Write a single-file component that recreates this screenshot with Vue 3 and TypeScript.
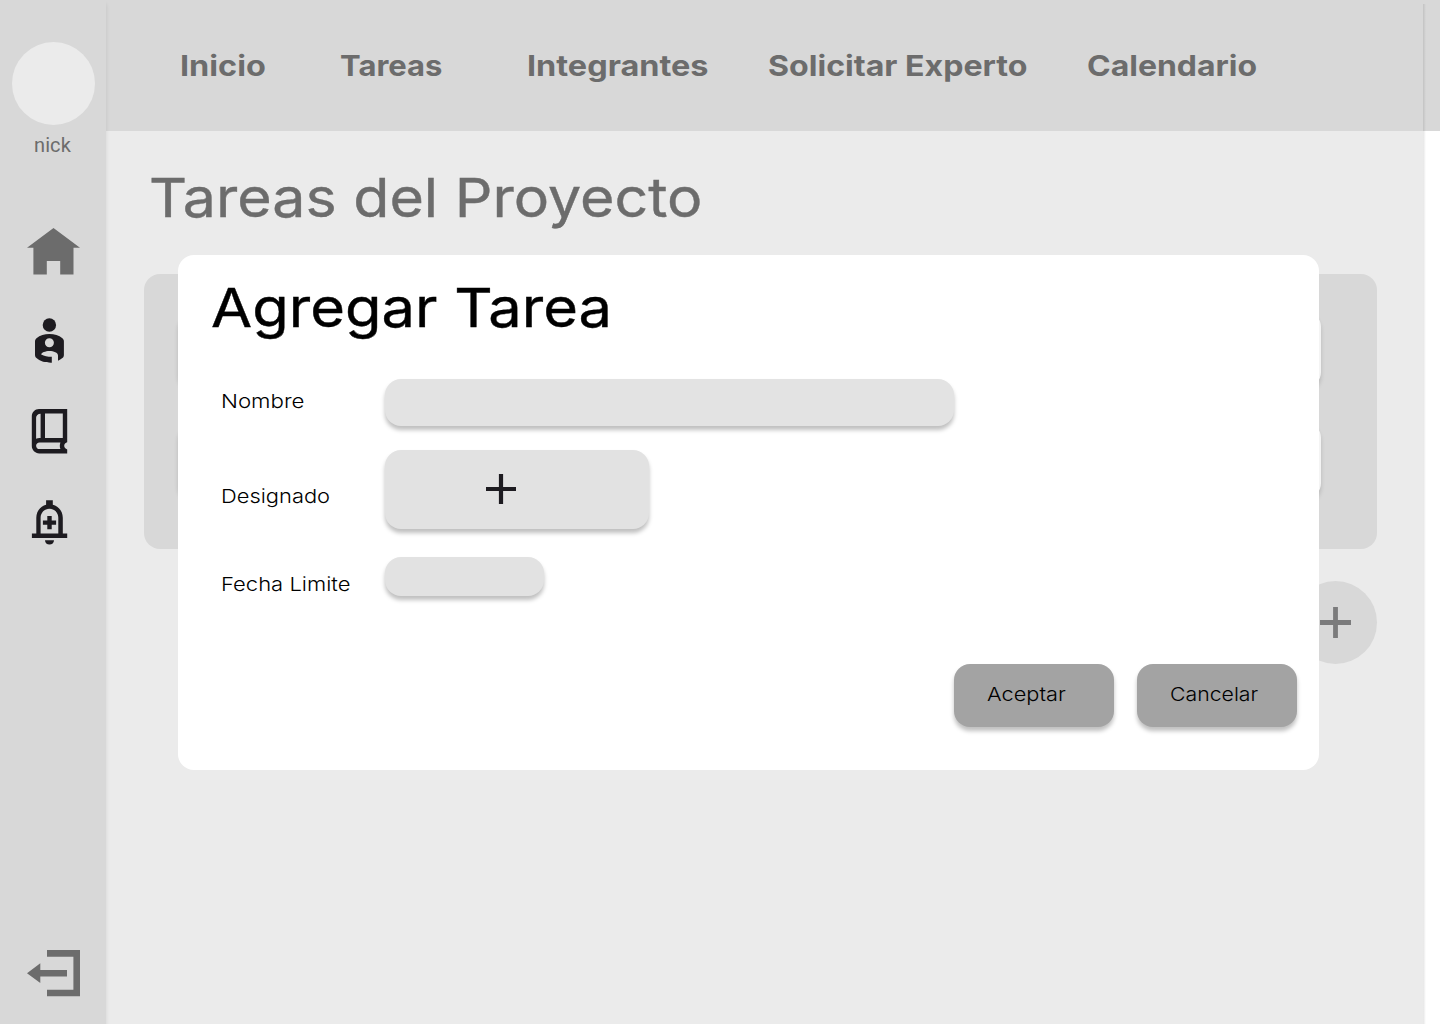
<script setup lang="ts">
interface NavItem {
  label: string
  width: number
  stretch: number
}

const navItems: NavItem[] = [
  { label: 'Inicio', width: 159.5, stretch: 1.118 },
  { label: 'Tareas', width: 187.5, stretch: 1.068 },
  { label: 'Integrantes', width: 241, stretch: 1.118 },
  { label: 'Solicitar Experto', width: 319, stretch: 1.108 },
  { label: 'Calendario', width: 190, stretch: 1.103 },
]
</script>

<template>
  <div class="app">
    <aside class="sidebar">
      <div class="avatar"></div>
      <span class="nick">nick</span>
      <svg class="icon home" width="107" height="48" viewBox="0 228 107 48">
        <path fill="#6c6c6c" d="M53.5 228 80 247.8h-6.5v26.7H60.2V261H46.8v13.5H33.4v-26.7H27z" />
      </svg>
      <svg class="icon person" width="107" height="46" viewBox="0 318 107 46">
        <circle cx="49.4" cy="325" r="6.7" fill="#1d1b20" />
        <path fill="#1d1b20" fill-rule="evenodd" d="M49.4 334c5 0 9.500 1.300 13 4.300 1 .9 1.500 1.900 1.500 3.300v13.200c0 1.400-.5 2.500-1.500 3.300-1.400 1.200-2.900 2-4.400 2.700v-5.300c0-2.600-4.300-4.400-8.600-4.400-4 0-8.200 1.800-8.200 3.300 3 1.600 6.300 2.400 10.600 2.400v5.900c-6 .1-11-.8-15.300-4.600-1-.8-1.500-1.900-1.500-3.300v-13.200c0-1.400.5-2.400 1.500-3.300 3.500-3 8-4.300 12.900-4.300zm0 4.200a4.500 4.500 0 1 0 0 9 4.500 4.500 0 1 0 0-9z" />
      </svg>
      <svg class="icon book" width="107" height="46" viewBox="0 408 107 46">
        <path fill="#1d1b20" fill-rule="evenodd" d="M39 409h28.200v33.300c-1.700.4-3 1.800-3 3.500s1.300 3.100 3 3.600v4H39.300c-4.200 0-7.500-3.200-7.500-7.300v-29.700c0-4.100 3.100-7.400 7.200-7.400zm6 4.500V438h17.800v-24.500zm-4.400.2c-2.700.1-4.500 1.700-4.500 4v21.100c1-.5 2.200-.8 3.500-.8h1zm-1.100 28.700c-2 0-3.400 1.500-3.400 3.300 0 2 1.500 3.400 3.400 3.400h20.900c-.8-2.200-.8-4.500 0-6.700z" />
      </svg>
      <svg class="icon bell" width="107" height="46" viewBox="0 500 107 46">
        <path fill="#1d1b20" fill-rule="evenodd" d="M46.100 500.300h6.700v4.500c5.900 1.500 10 6.600 10 12.900v15.900h4.400v4.400H31.900v-4.400h4.400v-15.900c0-6.300 4-11.400 9.800-12.900zm3.400 8.500c-5 0-8.900 3.900-8.900 8.900v15.900h17.700v-15.900c0-5-3.900-8.900-8.800-8.900z" />
        <path fill="#1d1b20" d="M47.300 516h4.400v4.400h4.400v4.400h-4.400v4.500h-4.400v-4.500h-4.400v-4.400h4.400zM45 540.200h9c0 2.500-2 4.400-4.500 4.400s-4.500-1.900-4.500-4.400z" />
      </svg>
      <svg class="icon logout" width="107" height="48" viewBox="0 949 107 48">
        <path fill="#6c6c6c" d="M47 950h33v46.300H47v-6.600h26.400v-33H47zM27 973.200l13.300-9.900v6.600H67v6.600H40.300v6.500z" />
      </svg>
    </aside>

    <header class="topbar">
      <nav class="nav">
        <a
          v-for="item in navItems"
          :key="item.label"
          class="nav-link"
          :style="{ width: item.width + 'px' }"
        ><span class="stretch" :style="{ transform: `scaleX(${item.stretch})` }">{{ item.label }}</span></a>
      </nav>
    </header>

    <main class="content">
      <h1 class="page-title"><span class="stretch">Tareas del Proyecto</span></h1>
      <section class="panel">
        <div class="task"></div>
        <div class="task"></div>
      </section>
      <button class="fab" aria-label="Agregar">
        <svg width="83" height="83" viewBox="0 0 83 83">
          <path d="M41.500 26v31M26 41.500h31" stroke="#7b7b7c" stroke-width="4.800" />
        </svg>
      </button>
    </main>
    <div class="edge"></div>

    <section class="modal">
      <h2 class="modal-title"><span class="stretch">Agregar Tarea</span></h2>
      <div class="row name-row">
        <span class="label"><span class="stretch">Nombre</span></span>
        <div class="field name"></div>
      </div>
      <div class="row assignee-row">
        <span class="label"><span class="stretch">Designado</span></span>
        <div class="field assignee">
          <svg width="32" height="32" viewBox="0 0 32 32">
            <path d="M16 1v30M1 16h30" stroke="#1d1b20" stroke-width="4.200" />
          </svg>
        </div>
      </div>
      <div class="row date-row">
        <span class="label"><span class="stretch">Fecha Limite</span></span>
        <div class="field date"></div>
      </div>
      <div class="actions">
        <button class="action accept"><span class="stretch">Aceptar</span></button>
        <button class="action cancel"><span class="stretch">Cancelar</span></button>
      </div>
    </section>
  </div>
</template>

<style>
body {
  margin: 0;
  background: #fff;
}
</style>

<style scoped>
.app {
  position: relative;
  width: 1440px;
  height: 1024px;
  overflow: hidden;
  display: grid;
  grid-template-columns: 106px 1334px;
  grid-template-rows: 131px 893px;
  font-family: Inter, "Open Sans", sans-serif;
  background: #fff;
}
.stretch {
  display: inline-block;
  transform-origin: 0 50%;
}
.sidebar {
  grid-row: 1 / 3;
  z-index: 1;
  display: flex;
  flex-direction: column;
  align-items: flex-start;
  background: #d8d8d8;
  box-shadow: 0 4px 4px rgba(0, 0, 0, 0.1);
}
.avatar {
  width: 83px;
  height: 83px;
  margin: 42px 0 0 12px;
  border-radius: 50%;
  background: #ebebeb;
}
.nick {
  margin: 8px 0 0 34px;
  height: 24px;
  font-family: Roboto, sans-serif;
  font-size: 20px;
  line-height: 24px;
  letter-spacing: 0.1px;
  color: #6c6c6c;
}
.icon {
  display: block;
  flex: none;
}
.home { margin-top: 71px; }
.person { margin-top: 42px; }
.book { margin-top: 44px; }
.bell { margin-top: 46px; }
.logout { margin-top: 403px; }
.topbar {
  background: #d8d8d8;
}
.nav {
  display: flex;
  padding: 48px 0 0 74px;
}
.nav-link {
  flex: none;
  font-size: 29px;
  font-weight: 700;
  line-height: 36px;
  white-space: nowrap;
  color: #6c6c6c;
}
.content {
  width: 1317px;
  background: #ebebeb;
  display: flex;
  flex-direction: column;
}
.page-title {
  margin: 34px 0 0 43px;
  height: 109px;
  font-size: 54px;
  font-weight: 400;
  line-height: 66px;
  white-space: nowrap;
  color: #6c6c6c;
  -webkit-text-stroke: 0.4px currentColor;
}
.page-title .stretch { transform: scaleX(1.094); }
.panel {
  box-sizing: border-box;
  width: 1233px;
  height: 275px;
  margin-left: 38px;
  padding: 37px 56px 0 34px;
  border-radius: 16px;
  background: #d8d8d8;
  display: flex;
  flex-direction: column;
  gap: 34px;
}
.task {
  height: 77px;
  border-radius: 16px;
  background: #f4f4f4;
  box-shadow: 0 4px 4px rgba(0, 0, 0, 0.15);
}
.fab {
  width: 83px;
  height: 83px;
  margin: 32px 0 0 1188px;
  padding: 0;
  border: 0;
  border-radius: 50%;
  background: #d8d8d8;
}
.fab svg { display: block; }
.edge {
  position: absolute;
  left: 1423px;
  top: 4px;
  width: 3px;
  height: 1020px;
  background: linear-gradient(90deg, rgba(0, 0, 0, 0.1), rgba(0, 0, 0, 0));
}
.modal {
  position: absolute;
  z-index: 2;
  left: 178px;
  top: 255px;
  width: 1141px;
  height: 515px;
  border-radius: 16px;
  background: #fff;
  color: #000;
}
.modal-title {
  margin: 0 0 0 33px;
  padding-top: 20px;
  height: 104px;
  font-size: 54px;
  font-weight: 400;
  line-height: 66px;
  white-space: nowrap;
  -webkit-text-stroke: 0.4px currentColor;
}
.modal-title .stretch { transform: scaleX(1.104); }
.row {
  display: flex;
  padding-left: 43px;
}
.label {
  width: 164px;
  font-size: 19.3px;
  font-weight: 300;
  line-height: 24px;
  white-space: nowrap;
}
.field {
  border-radius: 16px;
  background: #e2e2e2;
  box-shadow: 0 4px 4px rgba(0, 0, 0, 0.25);
}
.name-row { height: 71px; }
.name-row .label { margin-top: 10px; }
.name-row .stretch { transform: scaleX(1.155); }
.assignee-row { height: 107px; }
.assignee-row .label { margin-top: 34px; }
.assignee-row .stretch { transform: scaleX(1.135); }
.date-row { height: 107px; }
.date-row .label { margin-top: 15px; }
.date-row .stretch { transform: scaleX(1.142); }
.name { width: 569px; height: 47px; background: #e3e3e3; }
.assignee {
  box-sizing: border-box;
  width: 264px;
  height: 79px;
  padding: 23px 0 0 100px;
}
.assignee svg { display: block; }
.date { width: 159px; height: 39px; }
.actions {
  display: flex;
  gap: 23px;
  padding-left: 776px;
}
.action {
  width: 160px;
  height: 63px;
  padding: 0 0 3px 33px;
  border: 0;
  border-radius: 16px;
  background: #a3a3a3;
  box-shadow: 0 4px 4px rgba(0, 0, 0, 0.25);
  font-family: inherit;
  font-size: 19.3px;
  font-weight: 300;
  line-height: 24px;
  text-align: left;
  color: #000;
}
.accept .stretch { transform: scaleX(1.128); }
.cancel .stretch { transform: scaleX(1.103); }
</style>
